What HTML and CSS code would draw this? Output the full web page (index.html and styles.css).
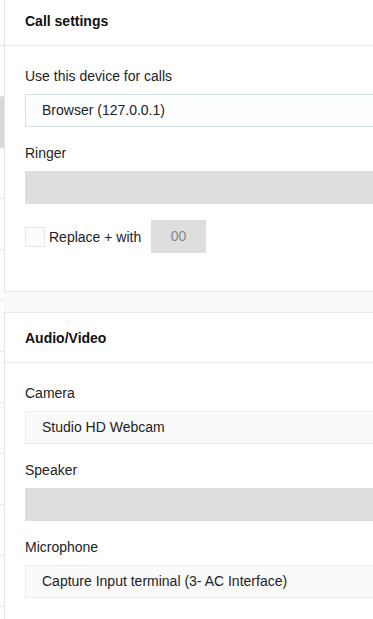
FILE: index.html
```html
<!DOCTYPE html>
<html lang="en">
<head>
    <meta charset="UTF-8">
    <meta name="viewport" content="width=device-width, initial-scale=1.0">
    <title>Settings</title>
    <link rel="stylesheet" href="styles.css">
</head>
<body>
    <div class="app">
        <!-- Sidebar (mostly hidden behind the settings panel) -->
        <ul class="sidebar">
            <li></li>
            <li></li>
            <li class="active"></li>
            <li></li>
            <li></li>
            <li></li>
            <li></li>
            <li></li>
            <li></li>
            <li></li>
            <li></li>
            <li></li>
        </ul>

        <div class="main">
            <!-- Call settings -->
            <div class="card">
                <div class="card-header">Call settings</div>
                <div class="card-body">
                    <label class="field-label">Use this device for calls</label>
                    <div class="select focused">Browser (127.0.0.1)</div>

                    <label class="field-label">Ringer</label>
                    <div class="select disabled"></div>

                    <div class="replace-row">
                        <span class="checkbox"></span>
                        <span class="replace-text">Replace + with</span>
                        <span class="prefix-input">00</span>
                    </div>
                </div>
            </div>

            <!-- Audio / Video -->
            <div class="card">
                <div class="card-header">Audio/Video</div>
                <div class="card-body">
                    <label class="field-label">Camera</label>
                    <div class="select">Studio HD Webcam</div>

                    <label class="field-label">Speaker</label>
                    <div class="select disabled"></div>

                    <label class="field-label">Microphone</label>
                    <div class="select">Capture Input terminal (3- AC Interface)</div>
                </div>
            </div>
        </div>
    </div>
</body>
</html>
```

FILE: styles.css
```css
* {
    margin: 0;
    padding: 0;
    box-sizing: border-box;
}

body {
    font-family: "Liberation Sans", Arial, sans-serif;
    font-size: 14px;
    color: #222;
    background-color: #f9f9f9;
    overflow: hidden;
}

.app {
    display: flex;
    margin-top: -5px;
}

.sidebar {
    width: 4px;
    flex-shrink: 0;
    list-style: none;
    background-color: #fcfcfc;
}

.sidebar li {
    height: 51px;
    border-bottom: 1px solid #e6e6e6;
}

.sidebar li.active {
    background-color: #d9d9d9;
}

.main {
    width: 480px;
    flex-shrink: 0;
}

.card {
    background-color: #fff;
    border-left: 1px solid #e4e4e4;
    border-top: 1px solid #e8e8e8;
    border-bottom: 1px solid #e8e8e8;
    margin-bottom: 20px;
}

.card-header {
    height: 50px;
    padding: 0 20px;
    display: flex;
    align-items: center;
    font-weight: bold;
    color: #111;
    border-bottom: 1px solid #ececec;
}

.card-body {
    padding: 21px 0 38px 20px;
}

.field-label {
    display: block;
    line-height: 18px;
    margin-bottom: 9px;
}

.select {
    height: 33px;
    line-height: 31px;
    padding-left: 16px;
    margin-bottom: 17px;
    border: 1px solid #ececec;
    background-color: #fafafa;
    color: #222;
}

.select.focused {
    border-color: #d3e2e7;
    background-color: #fcfeff;
}

.select.disabled {
    border-color: #dedede;
    background-color: #dedede;
}

.replace-row {
    display: flex;
    align-items: center;
    margin-top: -1px;
}

.checkbox {
    width: 20px;
    height: 20px;
    border: 1px solid #e8e8e8;
    background-color: #fcfcfc;
}

.replace-text {
    margin-left: 4px;
    width: 102px;
}

.prefix-input {
    width: 55px;
    height: 33px;
    line-height: 33px;
    text-align: center;
    background-color: #dedede;
    color: #888;
}
```
